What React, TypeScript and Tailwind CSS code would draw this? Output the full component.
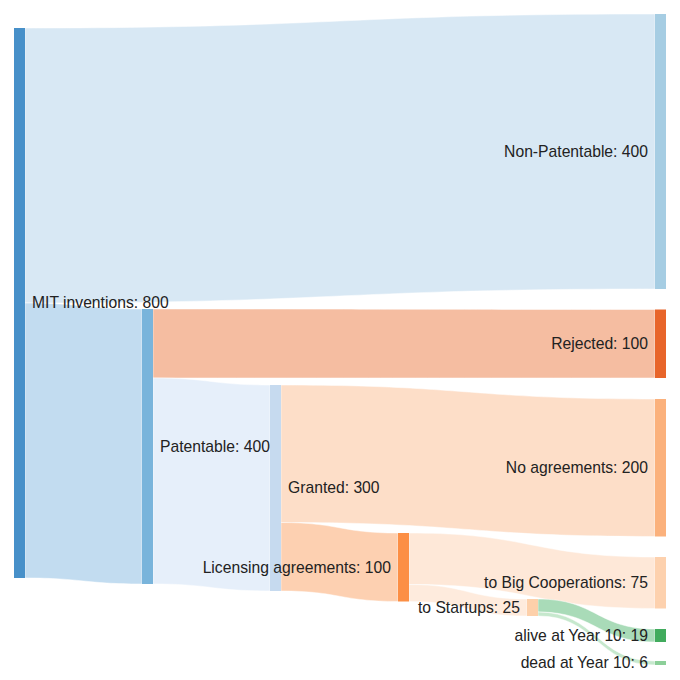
type Node = { id: string; label: string; x: number; y0: number; y1: number; color: string; side: 'left' | 'right' };
type Link = { from: string; to: string; s0: number; s1: number; t0: number; t1: number; color: string };

const W = 11;
const col = [14, 142, 270, 398, 527, 655];

const nodes: Node[] = [
  { id: 'mit', label: 'MIT inventions: 800', x: col[0], y0: 28, y1: 578, color: '#4790c9', side: 'right' },
  { id: 'np', label: 'Non-Patentable: 400', x: col[5], y0: 14, y1: 289, color: '#a6cde3', side: 'left' },
  { id: 'pat', label: 'Patentable: 400', x: col[1], y0: 309, y1: 584, color: '#79b4db', side: 'right' },
  { id: 'rej', label: 'Rejected: 100', x: col[5], y0: 309.5, y1: 378, color: '#e8652a', side: 'left' },
  { id: 'gr', label: 'Granted: 300', x: col[2], y0: 385, y1: 591, color: '#c6daef', side: 'right' },
  { id: 'na', label: 'No agreements: 200', x: col[5], y0: 399, y1: 536.5, color: '#fbb17c', side: 'left' },
  { id: 'lic', label: 'Licensing agreements: 100', x: col[3], y0: 533, y1: 601.5, color: '#fc8f45', side: 'left' },
  { id: 'big', label: 'to Big Cooperations: 75', x: col[5], y0: 557, y1: 608.5, color: '#fdd1ae', side: 'left' },
  { id: 'st', label: 'to Startups: 25', x: col[4], y0: 599, y1: 616, color: '#fdd0aa', side: 'left' },
  { id: 'al', label: 'alive at Year 10: 19', x: col[5], y0: 629, y1: 642, color: '#41ab5d', side: 'left' },
  { id: 'de', label: 'dead at Year 10: 6', x: col[5], y0: 661, y1: 665, color: '#8ccf99', side: 'left' },
];

const links: Link[] = [
  { from: 'mit', to: 'np', s0: 28, s1: 303, t0: 14, t1: 289, color: '#d8e8f4' },
  { from: 'mit', to: 'pat', s0: 303, s1: 578, t0: 309, t1: 584, color: '#c2dcf0' },
  { from: 'pat', to: 'rej', s0: 309, s1: 378, t0: 309.5, t1: 378, color: '#f5bda1' },
  { from: 'pat', to: 'gr', s0: 378, s1: 584, t0: 385, t1: 591, color: '#e6effa' },
  { from: 'gr', to: 'na', s0: 385, s1: 522.5, t0: 399, t1: 536.5, color: '#fddec8' },
  { from: 'gr', to: 'lic', s0: 522.5, s1: 591, t0: 533, t1: 601.5, color: '#fdd0b1' },
  { from: 'lic', to: 'big', s0: 533, s1: 584.5, t0: 557, t1: 608.5, color: '#fee8d8' },
  { from: 'lic', to: 'st', s0: 584.5, s1: 601.5, t0: 599, t1: 616, color: '#feebdd' },
  { from: 'st', to: 'al', s0: 599, s1: 612, t0: 629, t1: 642, color: '#a9dbb8' },
  { from: 'st', to: 'de', s0: 612, s1: 616, t0: 661, t1: 665, color: '#c6e8cd' },
];

const byId = Object.fromEntries(nodes.map((n) => [n.id, n]));

function linkPath(l: Link) {
  const x0 = byId[l.from].x + W;
  const x1 = byId[l.to].x;
  const xi = (x0 + x1) / 2;
  return `M${x0},${l.s0} C${xi},${l.s0} ${xi},${l.t0} ${x1},${l.t0} L${x1},${l.t1} C${xi},${l.t1} ${xi},${l.s1} ${x0},${l.s1} Z`;
}

export default function App() {
  return (
    <div className="w-[680px] h-[680px] bg-white">
      <svg width={680} height={680} viewBox="0 0 680 680" className="block">
        <g>
          {links.map((l) => (
            <path key={l.from + l.to} d={linkPath(l)} fill={l.color} stroke="#ffffff" strokeWidth={0.5} />
          ))}
        </g>
        <g>
          {nodes.map((n) => (
            <rect key={n.id} x={n.x} y={n.y0} width={W} height={n.y1 - n.y0} fill={n.color} />
          ))}
        </g>
        <g className="fill-[#222222] text-[15.7px]" style={{ fontFamily: '"Liberation Sans", Arial, sans-serif' }}>
          {nodes.map((n) => (
            <text
              key={n.id}
              x={n.side === 'right' ? n.x + W + 7 : n.x - 7}
              y={(n.y0 + n.y1) / 2}
              dy="0.35em"
              textAnchor={n.side === 'right' ? 'start' : 'end'}
            >
              {n.label}
            </text>
          ))}
        </g>
      </svg>
    </div>
  );
}
